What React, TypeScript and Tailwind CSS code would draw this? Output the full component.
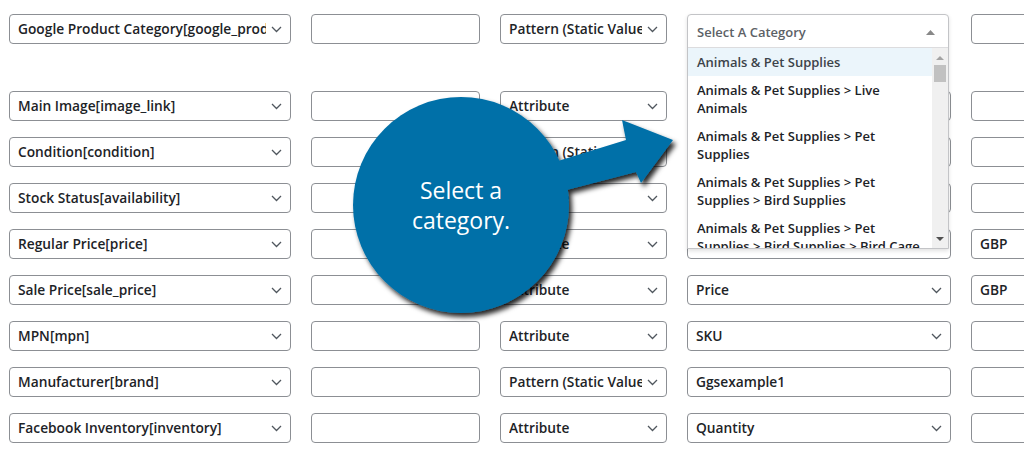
import React from "react";

type Cell =
  | { kind: "select"; value: string }
  | { kind: "input"; value: string }
  | { kind: "picker" };

interface Row {
  field: string;
  type: string;
  value: Cell;
  extra: string;
}

const ROWS: Row[] = [
  { field: "Google Product Category[google_product_category]", type: "Pattern (Static Value)", value: { kind: "picker" }, extra: "" },
  { field: "Main Image[image_link]", type: "Attribute", value: { kind: "select", value: "" }, extra: "" },
  { field: "Condition[condition]", type: "Pattern (Static Value)", value: { kind: "select", value: "" }, extra: "" },
  { field: "Stock Status[availability]", type: "Attribute", value: { kind: "select", value: "" }, extra: "" },
  { field: "Regular Price[price]", type: "Attribute", value: { kind: "select", value: "" }, extra: "GBP" },
  { field: "Sale Price[sale_price]", type: "Attribute", value: { kind: "select", value: "Price" }, extra: "GBP" },
  { field: "MPN[mpn]", type: "Attribute", value: { kind: "select", value: "SKU" }, extra: "" },
  { field: "Manufacturer[brand]", type: "Pattern (Static Value)", value: { kind: "input", value: "Ggsexample1" }, extra: "" },
  { field: "Facebook Inventory[inventory]", type: "Attribute", value: { kind: "select", value: "Quantity" }, extra: "" },
];

const CATEGORIES = [
  "Animals & Pet Supplies",
  "Animals & Pet Supplies > Live Animals",
  "Animals & Pet Supplies > Pet Supplies",
  "Animals & Pet Supplies > Pet Supplies > Bird Supplies",
  "Animals & Pet Supplies > Pet Supplies > Bird Supplies > Bird Cage Accessories",
];

const font = "font-['Open_Sans','Liberation_Sans',sans-serif]";

function Chevron() {
  return (
    <svg width="11" height="7" viewBox="0 0 11 7" className="shrink-0">
      <path d="M1 1l4.5 4.5L10 1" fill="none" stroke="#50575e" strokeWidth="1.3" />
    </svg>
  );
}

function Select({ value, width }: { value: string; width: string }) {
  return (
    <div
      className={`${width} h-[30px] shrink-0 flex items-center rounded-[4px] border border-[#8c8f94] bg-white pl-[8px] pr-[8px]`}
    >
      <span className="flex-1 overflow-hidden whitespace-nowrap text-[13.75px] font-semibold text-[#1d2327] mr-[5px] pt-px">
        {value}
      </span>
      <Chevron />
    </div>
  );
}

function Input({ value, width }: { value: string; width: string }) {
  return (
    <div
      className={`${width} h-[30px] shrink-0 flex items-center rounded-[4px] border border-[#8c8f94] bg-white px-[8px] pt-px text-[13.75px] font-semibold text-[#1d2327] whitespace-nowrap overflow-hidden`}
    >
      {value}
    </div>
  );
}

// opened category picker with its results list
function CategoryPicker() {
  return (
    <div className="relative w-[264px] h-[30px] shrink-0">
      <div className="absolute left-0 top-0 w-[262px] z-10 border border-[#c3c4c7] rounded-t-[4px] bg-white shadow-[0_2px_4px_rgba(0,0,0,0.12)]">
        <div className="h-[33px] flex items-center justify-between pl-[9px] pr-[13px] pt-[3px] border-b border-[#dcdcde]">
          <span className="text-[13px] font-semibold text-[#5c6166]">Select A Category</span>
          <svg width="9" height="5" viewBox="0 0 9 5">
            <path d="M0 5L4.5 0L9 5z" fill="#888" />
          </svg>
        </div>
        <div className="flex h-[200px] overflow-hidden">
          <ul className="flex-1">
            {CATEGORIES.map((c, i) => (
              <li
                key={c}
                className={`px-[9px] py-[5px] leading-[18px] text-[13px] font-semibold ${
                  i === 0 ? "bg-[#ebf5fb] text-[#3c434a]" : "text-[#1d2327]"
                }`}
              >
                {c}
              </li>
            ))}
          </ul>
          <div className="w-[16px] bg-[#f0f0f0] flex flex-col items-center">
            <svg width="8" height="4" viewBox="0 0 8 4" className="mt-[8px]">
              <path d="M0 4L4 0L8 4z" fill="#a3a3a3" />
            </svg>
            <div className="mt-[5px] w-[12px] h-[17px] bg-[#c1c1c1]" />
            <div className="flex-1" />
            <svg width="8" height="4" viewBox="0 0 8 4" className="mb-[7px]">
              <path d="M0 0L8 0L4 4z" fill="#505050" />
            </svg>
          </div>
        </div>
      </div>
    </div>
  );
}

function Callout() {
  return (
    <div className="absolute left-[340px] top-[85px] w-[350px] h-[240px] pointer-events-none">
      <svg width="350" height="240" viewBox="0 0 350 240" className="absolute inset-0">
        <defs>
          <filter id="drop" x="-20%" y="-20%" width="150%" height="150%">
            <feDropShadow dx="3" dy="4" stdDeviation="2.5" floodColor="#000" floodOpacity="0.85" />
          </filter>
        </defs>
        <g filter="url(#drop)" fill="#0670a8">
          <circle cx="121" cy="120" r="108" />
          <path d="M205 80 L286 55 L282 35 L333 55 L301 98 L296 87 L215 108 Z" />
        </g>
      </svg>
      <div
        className={`absolute left-[13px] top-[12px] w-[216px] h-[216px] flex items-center justify-center text-center text-white text-[23px] leading-[30px] ${font}`}
      >
        <span>
          Select a
          <br />
          category.
        </span>
      </div>
    </div>
  );
}

export default function App() {
  return (
    <div className={`relative w-[1024px] h-[456px] overflow-hidden bg-white ${font}`}>
      <div className="flex flex-col gap-[16px] pl-[9px] pt-[14px]">
        {ROWS.map((r, i) => (
          <div key={r.field} className={`flex gap-[20px] ${i === 0 ? "mb-[31px]" : ""}`}>
            <Select value={r.field} width="w-[282px]" />
            <Input value="" width="w-[169px]" />
            <Select value={r.type} width="w-[167px]" />
            {r.value.kind === "picker" ? (
              <CategoryPicker />
            ) : r.value.kind === "input" ? (
              <Input value={r.value.value} width="w-[264px]" />
            ) : (
              <Select value={r.value.value} width="w-[264px]" />
            )}
            <Input value={r.extra} width="w-[120px]" />
          </div>
        ))}
      </div>
      <Callout />
    </div>
  );
}
